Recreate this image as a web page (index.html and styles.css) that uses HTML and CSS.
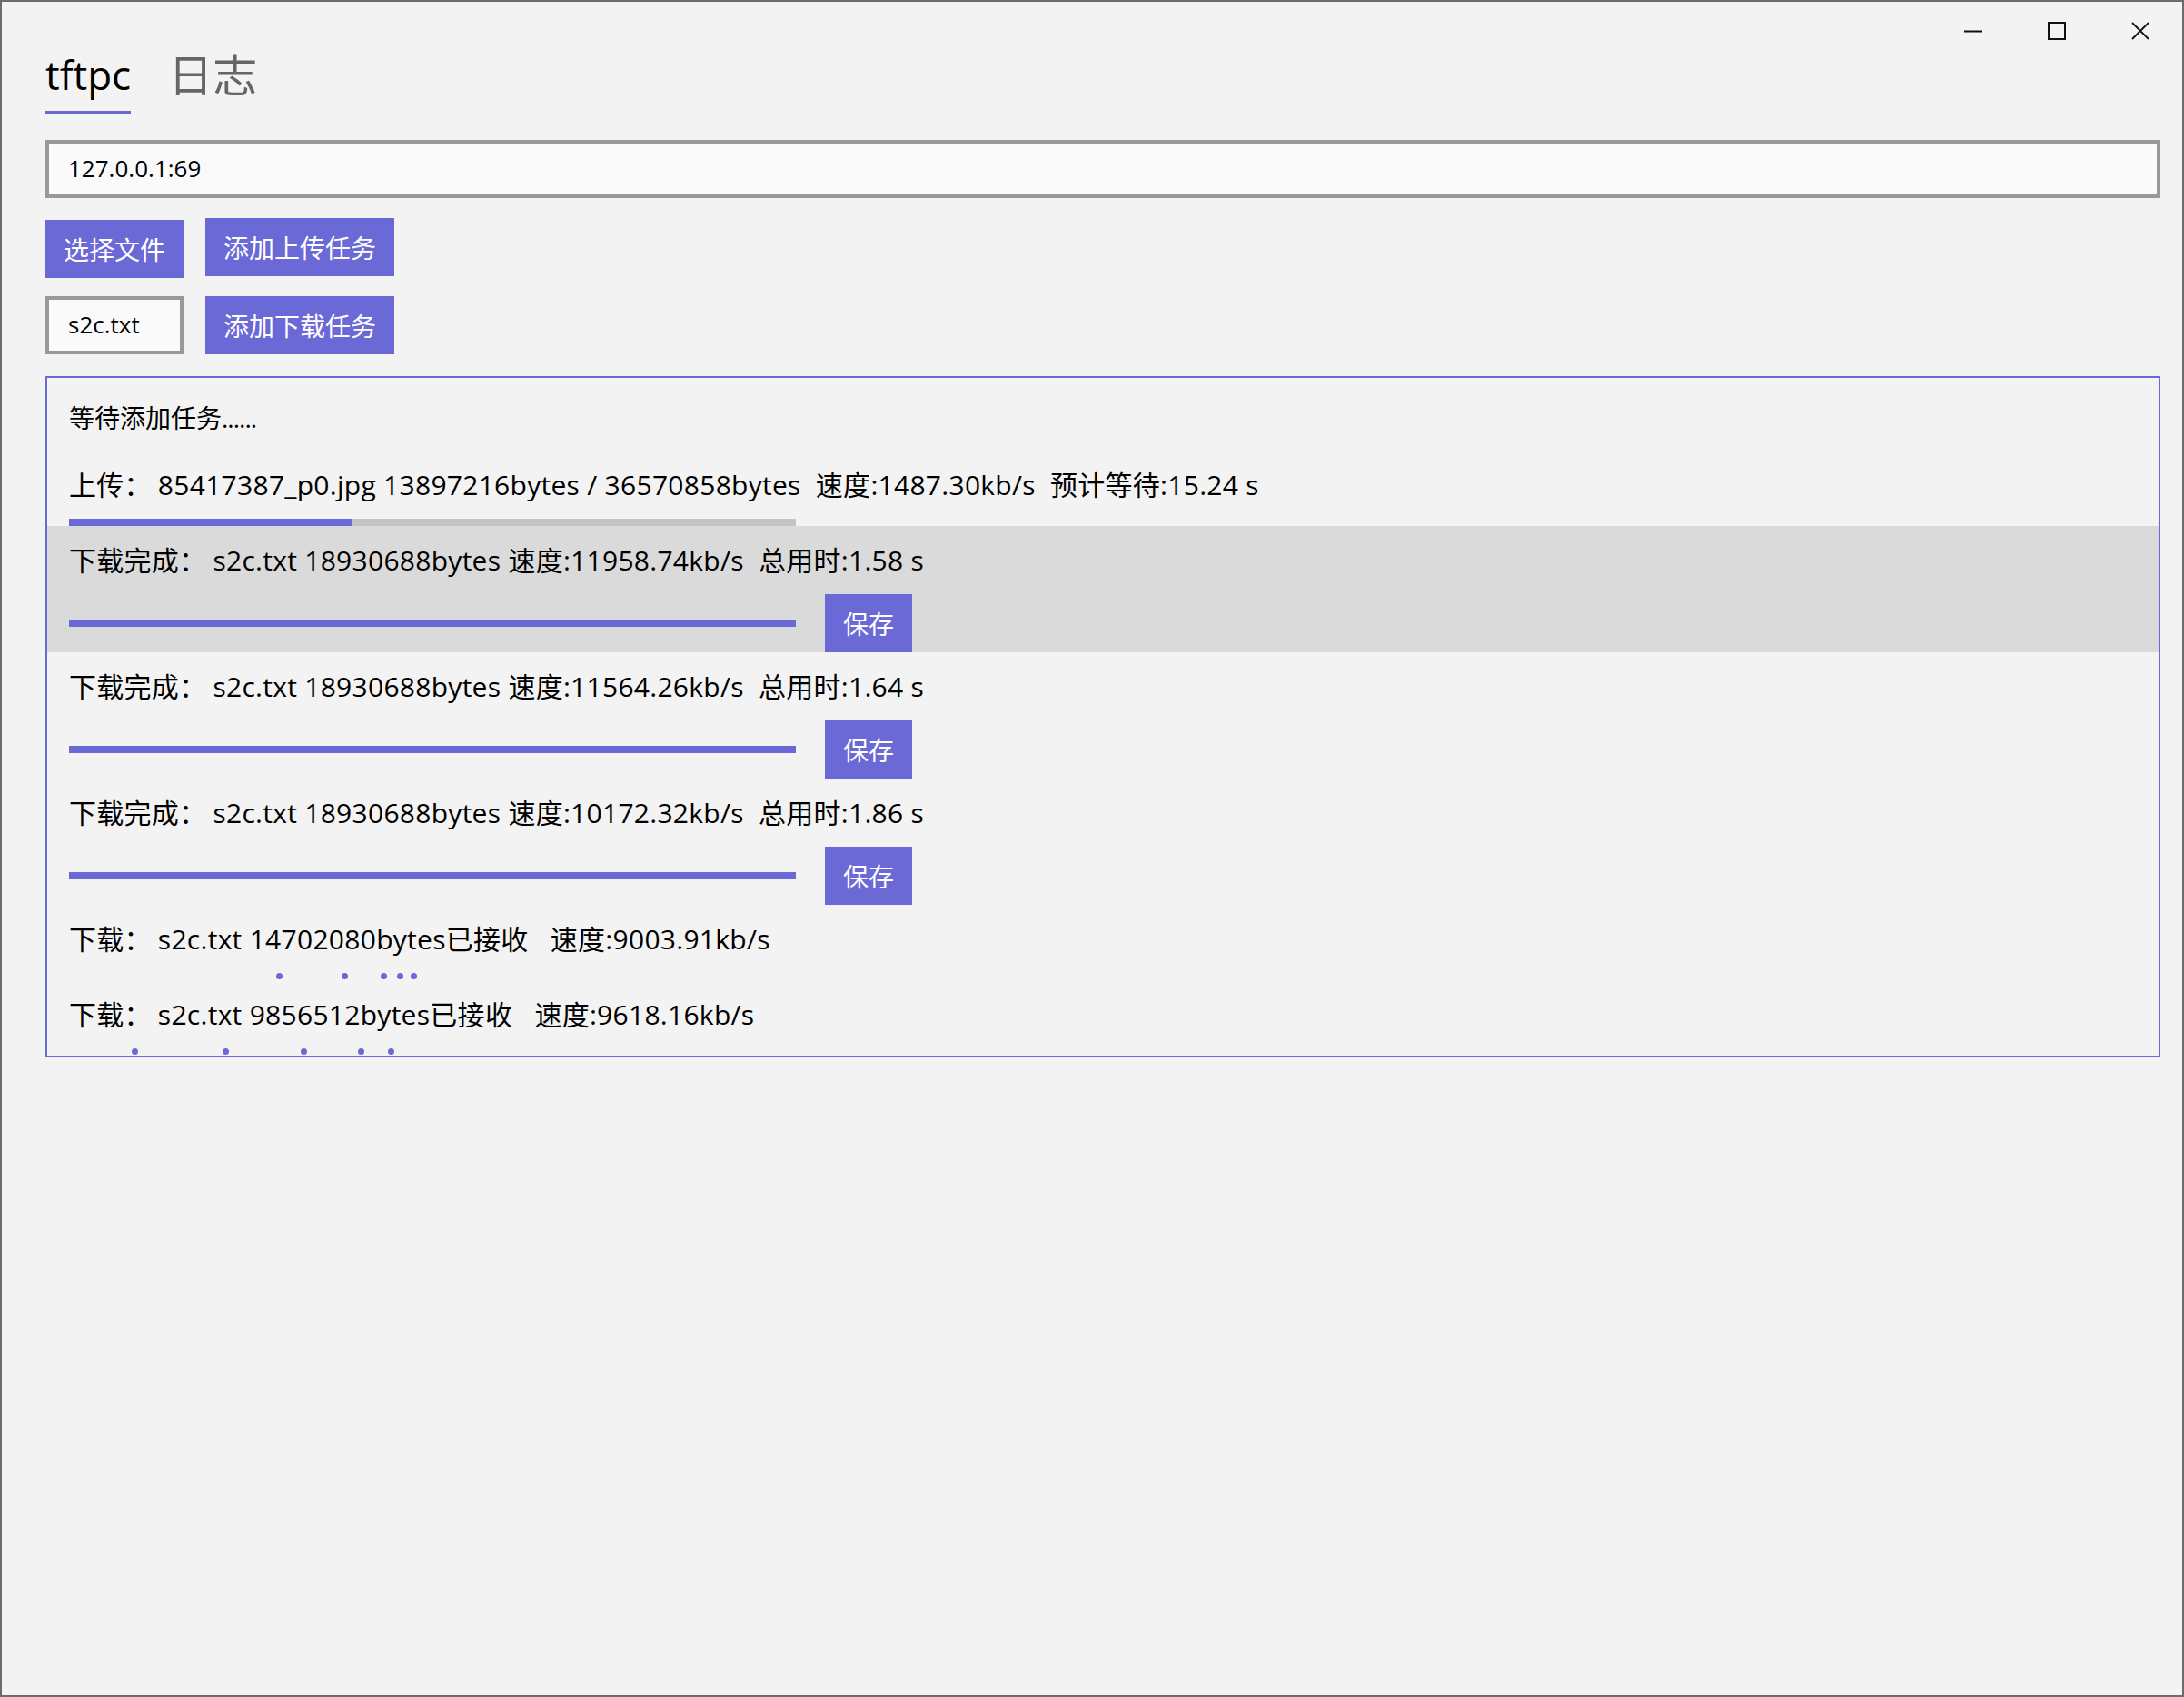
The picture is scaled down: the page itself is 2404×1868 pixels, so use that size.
FILE: index.html
```html
<!DOCTYPE html>
<html lang="zh-CN">
<head>
<meta charset="utf-8">
<title>tftpc</title>
<link rel="stylesheet" href="styles.css">
</head>
<body>
<div class="window">
  <div class="caption">
    <div class="cap-btn"><svg width="20" height="20" viewBox="0 0 20 20"><path d="M0 10.5H20" stroke="#111" stroke-width="2" fill="none"/></svg></div>
    <div class="cap-btn"><svg width="20" height="20" viewBox="0 0 20 20"><rect x="1" y="1" width="18" height="18" stroke="#111" stroke-width="2" fill="none"/></svg></div>
    <div class="cap-btn"><svg width="20" height="20" viewBox="0 0 20 20"><path d="M1 1L19 19M19 1L1 19" stroke="#111" stroke-width="1.8" fill="none"/></svg></div>
  </div>

  <nav class="pivot">
    <div class="tab active"><span class="tab-label">tftpc</span><span class="tab-line"></span></div>
    <div class="tab"><span class="tab-label cjk">日志</span></div>
  </nav>

  <div class="field url">127.0.0.1:69</div>

  <div class="row">
    <button class="btn btn-offset">选择文件</button>
    <button class="btn">添加上传任务</button>
  </div>
  <div class="row row-second">
    <div class="field small">s2c.txt</div>
    <button class="btn">添加下载任务</button>
  </div>

  <div class="list">
    <div class="item waiting">等待添加任务<span class="ellipsis">......</span></div>

    <div class="item">
      <div class="line"><span class="label">上传：</span>85417387_p0.jpg 13897216bytes / 36570858bytes  速度:1487.30kb/s  预计等待:15.24 s</div>
      <div class="bar"><div class="fill" style="width:38.9%"></div></div>
    </div>

    <div class="item done selected">
      <div class="line"><span class="label">下载完成：</span>s2c.txt 18930688bytes 速度:11958.74kb/s  总用时:1.58 s</div>
      <div class="done-row"><div class="bar"><div class="fill" style="width:100%"></div></div><button class="btn">保存</button></div>
    </div>

    <div class="item done">
      <div class="line"><span class="label">下载完成：</span>s2c.txt 18930688bytes 速度:11564.26kb/s  总用时:1.64 s</div>
      <div class="done-row"><div class="bar"><div class="fill" style="width:100%"></div></div><button class="btn">保存</button></div>
    </div>

    <div class="item done">
      <div class="line"><span class="label">下载完成：</span>s2c.txt 18930688bytes 速度:10172.32kb/s  总用时:1.86 s</div>
      <div class="done-row"><div class="bar"><div class="fill" style="width:100%"></div></div><button class="btn">保存</button></div>
    </div>

    <div class="item">
      <div class="line"><span class="label">下载：</span>s2c.txt 14702080bytes已接收   速度:9003.91kb/s</div>
      <div class="dots">
        <span class="dot" style="left:228px"></span>
        <span class="dot" style="left:300px"></span>
        <span class="dot" style="left:343px"></span>
        <span class="dot" style="left:361px"></span>
        <span class="dot" style="left:376px"></span>
      </div>
    </div>

    <div class="item">
      <div class="line"><span class="label">下载：</span>s2c.txt 9856512bytes已接收   速度:9618.16kb/s</div>
      <div class="dots">
        <span class="dot" style="left:69px"></span>
        <span class="dot" style="left:169px"></span>
        <span class="dot" style="left:255px"></span>
        <span class="dot" style="left:318px"></span>
        <span class="dot" style="left:351px"></span>
      </div>
    </div>
  </div>
</div>
</body>
</html>
```

FILE: styles.css
```css
html, body {
  margin: 0;
  padding: 0;
  background: #f3f3f3;
}

body {
  font-family: "Open Sans", "Noto Sans CJK SC", sans-serif;
  color: #000;
}

.window {
  position: relative;
  width: 2404px;
  height: 1868px;
  box-sizing: border-box;
  border: 2px solid #6c6c6c;
  background: #f3f3f3;
  padding: 52px 24px 0 48px;
}

.caption {
  position: absolute;
  top: 0;
  right: 0;
  display: flex;
}

.cap-btn {
  width: 92px;
  height: 64px;
  display: flex;
  align-items: center;
  justify-content: center;
}

.pivot {
  display: flex;
  align-items: flex-start;
  gap: 41px;
}

.tab {
  display: flex;
  flex-direction: column;
}

.tab-label {
  font-size: 44px;
  line-height: 56px;
  color: #666;
}

.tab-label.cjk {
  font-size: 49px;
}

.tab.active .tab-label {
  color: #000;
}

.tab-line {
  margin-top: 12px;
  height: 4px;
  background: #6b69d6;
}

.field {
  box-sizing: border-box;
  height: 64px;
  border: 4px solid #999;
  background: #fafafa;
  font-size: 26px;
  line-height: 54px;
  padding-left: 21px;
}

.url {
  margin-top: 28px;
}

.small {
  width: 152px;
}

.row {
  display: flex;
  align-items: flex-start;
  gap: 24px;
  margin-top: 22px;
}

.row-second {
  margin-top: 20px;
}

.btn {
  box-sizing: border-box;
  height: 64px;
  border: none;
  background: #6b69d6;
  color: #fff;
  font-family: "Open Sans", "Noto Sans CJK SC", sans-serif;
  font-size: 28px;
  padding: 0 20px;
  margin: 0;
}

.btn-offset {
  margin-top: 2px;
  width: 152px;
}

.list {
  margin-top: 24px;
  border: 2px solid #6b69d6;
  overflow: hidden;
}

.item {
  padding: 18px 24px 0;
}

.waiting {
  padding-top: 24px;
  padding-bottom: 16px;
  font-size: 28px;
  line-height: 40px;
}

.ellipsis {
  letter-spacing: -1px;
}

.line {
  font-size: 30px;
  line-height: 40px;
  letter-spacing: 0.28px;
  white-space: pre;
}

.label {
  margin-right: 7px;
}

.bar {
  margin-top: 17px;
  width: 800px;
  height: 8px;
  background: #c4c4c4;
}

.fill {
  height: 100%;
  background: #6b69d6;
}

.selected {
  background: #dadada;
}

.done-row {
  margin-top: 17px;
  display: flex;
  align-items: center;
  gap: 32px;
}

.done-row .bar {
  margin-top: 0;
}

.dots {
  position: relative;
  margin-top: 17px;
  width: 800px;
  height: 8px;
}

.dot {
  position: absolute;
  top: 0;
  width: 7px;
  height: 7px;
  border-radius: 50%;
  background: #6b69d6;
}
```
